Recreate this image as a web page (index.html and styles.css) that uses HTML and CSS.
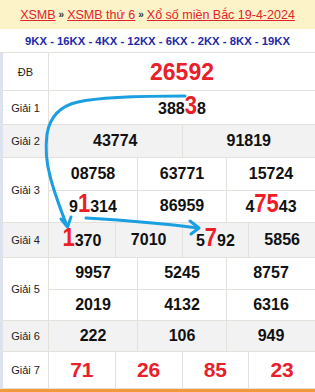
FILE: index.html
```html
<!DOCTYPE html>
<html lang="vi">
<head>
<meta charset="utf-8">
<title>XSMB 19-4-2024</title>
<link rel="stylesheet" href="styles.css">
</head>
<body>
<div class="page">
  <div class="head">
    <a href="#">XSMB</a><span class="sep">»</span><a href="#">XSMB thứ 6</a><span class="sep">»</span><a href="#">Xổ số miền Bắc 19-4-2024</a>
  </div>
  <div class="codes">9KX - 16KX - 4KX - 12KX - 6KX - 2KX - 8KX - 19KX</div>

  <div class="row r-db">
    <div class="label">ĐB</div>
    <div class="cells c1"><div class="cell db">26592</div></div>
  </div>
  <div class="row r-g1">
    <div class="label">Giải 1</div>
    <div class="cells c1"><div class="cell">388<span class="hl">3</span>8</div></div>
  </div>
  <div class="row r-g2 alt">
    <div class="label">Giải 2</div>
    <div class="cells c2"><div class="cell">43774</div><div class="cell">91819</div></div>
  </div>
  <div class="row r-g3">
    <div class="label">Giải 3</div>
    <div class="cells c3">
      <div class="cell">08758</div><div class="cell">63771</div><div class="cell">15724</div>
      <div class="cell">9<span class="hl">1</span>314</div><div class="cell">86959</div><div class="cell">4<span class="hl">75</span>43</div>
    </div>
  </div>
  <div class="row r-g4 alt">
    <div class="label">Giải 4</div>
    <div class="cells c4">
      <div class="cell"><span class="hl">1</span>370</div><div class="cell">7010</div><div class="cell">5<span class="hl">7</span>92</div><div class="cell">5856</div>
    </div>
  </div>
  <div class="row r-g5">
    <div class="label">Giải 5</div>
    <div class="cells c3">
      <div class="cell">9957</div><div class="cell">5245</div><div class="cell">8757</div>
      <div class="cell">2019</div><div class="cell">4132</div><div class="cell">6316</div>
    </div>
  </div>
  <div class="row r-g6 alt">
    <div class="label">Giải 6</div>
    <div class="cells c3">
      <div class="cell">222</div><div class="cell">106</div><div class="cell">949</div>
    </div>
  </div>
  <div class="row r-g7">
    <div class="label">Giải 7</div>
    <div class="cells c4">
      <div class="cell red">71</div><div class="cell red">26</div><div class="cell red">85</div><div class="cell red">23</div>
    </div>
  </div>
  <div class="foot"></div>

  <svg class="arrows" width="315" height="392" viewBox="0 0 315 392" xmlns="http://www.w3.org/2000/svg">
    <g fill="none" stroke="#1a9fe0" stroke-width="3" stroke-linecap="round" stroke-linejoin="round">
      <path d="M185 96 C 150 96, 100 97, 78 102 C 60 106, 50 116, 47 134 C 45 150, 47 165, 50 176 C 54 192, 60 208, 67 226"/>
      <path d="M61 219 L67.5 227 L71 217"/>
      <path d="M86 218 C 120 220, 160 223, 198 228"/>
      <path d="M190 221 L199 228 L191 234"/>
    </g>
  </svg>
</div>
</body>
</html>
```
FILE: styles.css
```css
html, body {
  margin: 0;
  padding: 0;
  background: #fff;
}
body {
  font-family: "Liberation Sans", Arial, sans-serif;
  color: #111;
}
.page {
  position: relative;
  width: 315px;
  height: 392px;
  overflow: hidden;
}
.head {
  height: 29px;
  background: #fdf3c8;
  display: flex;
  align-items: center;
  justify-content: center;
  font-size: 12.5px;
  white-space: nowrap;
}
.head a {
  color: #e3232c;
  text-decoration: underline;
}
.sep {
  color: #333;
  font-size: 10px;
  font-weight: bold;
  margin: 0 3px;
}
.codes {
  height: 23px;
  border-bottom: 1px solid #e4e0dc;
  display: flex;
  align-items: center;
  justify-content: center;
  color: #1d2aa6;
  font-weight: bold;
  font-size: 11.3px;
  white-space: nowrap;
}
.row {
  display: flex;
  border-left: 3px solid #dde3ee;
  border-bottom: 1px solid #e4e0dc;
  background: #fff;
}
.row.alt {
  background: #f2f2f2;
}
.label {
  width: 45px;
  flex: none;
  border-right: 1px solid #e4e0dc;
  display: flex;
  align-items: center;
  justify-content: center;
  font-size: 11px;
  color: #222;
}
.cells {
  flex: 1;
  display: grid;
  gap: 1px;
  background: #e4e0dc;
}
.c1 { grid-template-columns: 1fr; }
.c2 { grid-template-columns: repeat(2, 1fr); }
.c3 { grid-template-columns: repeat(3, 1fr); }
.c4 { grid-template-columns: repeat(4, 1fr); }
.cell {
  display: flex;
  align-items: baseline;
  justify-content: center;
  align-content: center;
  flex-wrap: wrap;
  background: #fff;
  font-weight: bold;
  font-size: 16px;
  line-height: 18px;
  color: #111;
}
.alt .cell {
  background: #f2f2f2;
}
.r-db { height: 37px; }
.r-g1 { height: 33px; }
.r-g2 { height: 32px; }
.r-g3 { height: 64px; }
.r-g4 { height: 34px; }
.r-g5 { height: 62px; }
.r-g6 { height: 30px; }
.r-g7 { height: 36px; }
.r-g3 .cells, .r-g5 .cells { grid-template-rows: 1fr 1fr; }
.cell.db {
  color: #e8202a;
  font-size: 23px;
  line-height: 24px;
}
.cell.red {
  color: #e8202a;
  font-size: 21px;
  line-height: 22px;
}
.hl {
  display: inline-block;
  color: #ee1c25;
  font-size: 22px;
  line-height: 18px;
  transform: scaleY(1.18);
  transform-origin: 50% 75%;
}
.foot {
  height: 3px;
  background: #f39a3b;
}
.arrows {
  position: absolute;
  left: 0;
  top: 0;
  pointer-events: none;
}
```
